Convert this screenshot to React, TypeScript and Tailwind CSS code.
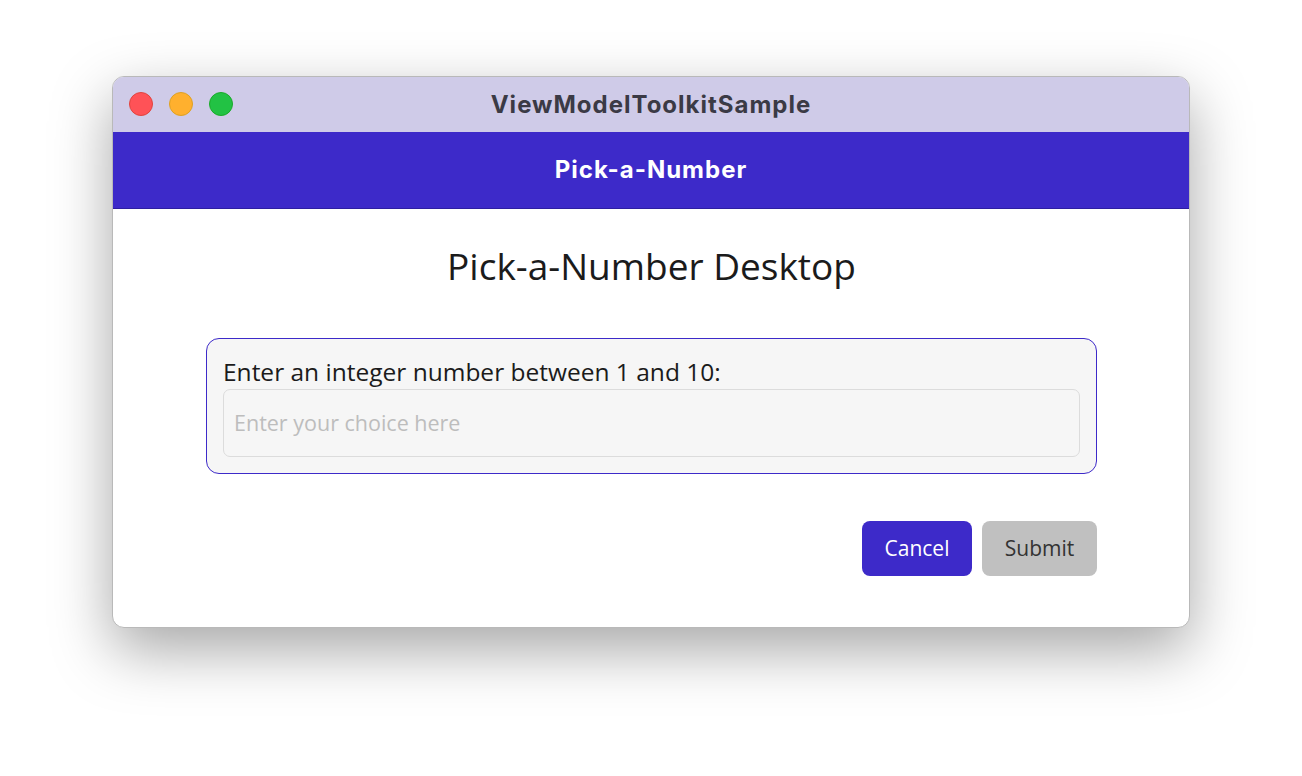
export default function App() {
  return (
    <div className="flex h-[776px] w-[1302px] justify-center bg-white pt-[76px]">
      <div className="flex h-[552px] w-[1078px] flex-col overflow-hidden rounded-[12px] border border-[#b9b9b9] bg-white shadow-[0_22px_60px_rgba(0,0,0,0.35)]">
        {/* Title bar */}
        <div className="relative flex h-[55px] shrink-0 items-center justify-center bg-[#cfcbe8]">
          <div className="absolute left-[16px] top-[15px] flex gap-[16px]">
            <span className="h-[24px] w-[24px] rounded-full border border-[#e0443e] bg-[#ff5257]" />
            <span className="h-[24px] w-[24px] rounded-full border border-[#dea123] bg-[#ffb02e]" />
            <span className="h-[24px] w-[24px] rounded-full border border-[#1aab29] bg-[#22c244]" />
          </div>
          <span className="font-['Inter',sans-serif] text-[24px] font-bold tracking-[1px] text-[#3b3a45]">
            ViewModelToolkitSample
          </span>
        </div>

        {/* Nav bar */}
        <div className="flex h-[77px] shrink-0 items-center justify-center border-b border-[#2e1fa0] bg-[#3d2ac9]">
          <span className="font-['Inter',sans-serif] text-[24px] font-bold tracking-[1px] text-white">
            Pick-a-Number
          </span>
        </div>

        {/* Content */}
        <div className="flex flex-1 flex-col pl-[93px] pr-[92px] font-['Open_Sans',sans-serif]">
          <h1 className="mt-[33px] text-center text-[37px] leading-[48px] text-[#1b1b1b]">
            Pick-a-Number Desktop
          </h1>

          <div className="mt-[48px] rounded-[13px] border border-[#3d2ac9] bg-[#f6f6f6] px-[16px] pb-[16px] pt-[16px]">
            <div className="text-[24.5px] leading-[34px] text-[#1b1b1b]">
              Enter an integer number between 1 and 10:
            </div>
            <div className="flex h-[68px] items-center rounded-[7px] border border-[#dcdcdc] px-[10px]">
              <input
                className="w-full bg-transparent text-[21.5px] text-[#1b1b1b] outline-none placeholder:text-[#bdbdbd]"
                placeholder="Enter your choice here"
              />
            </div>
          </div>

          <div className="mt-[47px] flex justify-end gap-[10px]">
            <button className="h-[55px] w-[110px] rounded-[8px] bg-[#3d2ac9] text-[21px] text-white">
              Cancel
            </button>
            <button className="h-[55px] w-[115px] rounded-[8px] bg-[#c0c0c0] text-[21px] text-[#333333]">
              Submit
            </button>
          </div>
        </div>
      </div>
    </div>
  );
}
